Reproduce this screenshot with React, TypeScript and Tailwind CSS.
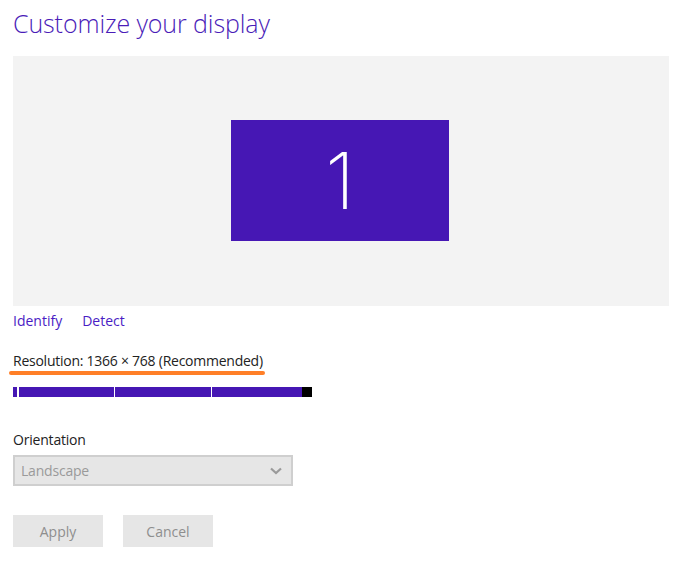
export default function App() {
  const font = { fontFamily: '"Open Sans", "Noto Sans", sans-serif' };
  return (
    <div className="w-[689px] h-[563px] bg-white relative overflow-hidden" style={font}>
      <div className="pl-[13px] pt-[3px]">
        <h1 className="text-[25px] leading-[40px] font-light text-[#4a1cb8] tracking-[-0.1px]">Customize your display</h1>
        <div className="mt-[13px] w-[656px] h-[250px] bg-[#f3f3f3] flex items-center justify-center">
          <div className="w-[218px] h-[121px] bg-[#4617b4] flex items-center justify-center -ml-[2px] -mt-[1px]">
            <span className="text-white text-[78px] leading-none font-extralight" style={{ fontFamily: 'Inter, sans-serif' }}>1</span>
          </div>
        </div>
        <div className="flex gap-[20px] mt-[5px] text-[14px] leading-[20px] text-[#4a1cc4]">
          <span>Identify</span>
          <span>Detect</span>
        </div>
        <div className="mt-[20px] relative w-fit text-[14px] leading-[20px] text-[#222]">
          <span className="tracking-[-0.25px]">Resolution: 1366 × 768 (Recommended)</span>
          <div className="absolute left-[-4px] right-[-2px] -bottom-[4px] h-[4px] rounded-full bg-[#ff7f27]" />
        </div>
        <div className="mt-[16px] flex h-[10px] w-[299px]">
          <div className="w-[4px] bg-[#4617b4]" />
          <div className="w-[2px] bg-white" />
          <div className="w-[95px] bg-[#4617b4]" />
          <div className="w-[1px] bg-white" />
          <div className="w-[96px] bg-[#4617b4]" />
          <div className="w-[1px] bg-white" />
          <div className="w-[90px] bg-[#4617b4]" />
          <div className="w-[10px] bg-black" />
        </div>
        <div className="mt-[33px] text-[14px] leading-[20px] text-[#222] tracking-[-0.2px]">Orientation</div>
        <div className="mt-[5px] w-[280px] h-[31px] border-2 border-[#cfcfcf] bg-[#e6e6e6] flex items-center justify-between pl-[6px] pr-[9px]">
          <span className="text-[14px] text-[#9a9a9a] tracking-[-0.2px]">Landscape</span>
          <svg width="12" height="8" viewBox="0 0 12 8" fill="none">
            <path d="M1 1.5 L6 6 L11 1.5" stroke="#9a9a9a" strokeWidth="2.2" />
          </svg>
        </div>
        <div className="mt-[29px] flex gap-[20px]">
          <div className="w-[90px] h-[32px] bg-[#e6e6e6] flex items-center justify-center text-[14px] text-[#8e8e8e]">Apply</div>
          <div className="w-[90px] h-[32px] bg-[#e6e6e6] flex items-center justify-center text-[14px] text-[#8e8e8e]">Cancel</div>
        </div>
      </div>
    </div>
  );
}
